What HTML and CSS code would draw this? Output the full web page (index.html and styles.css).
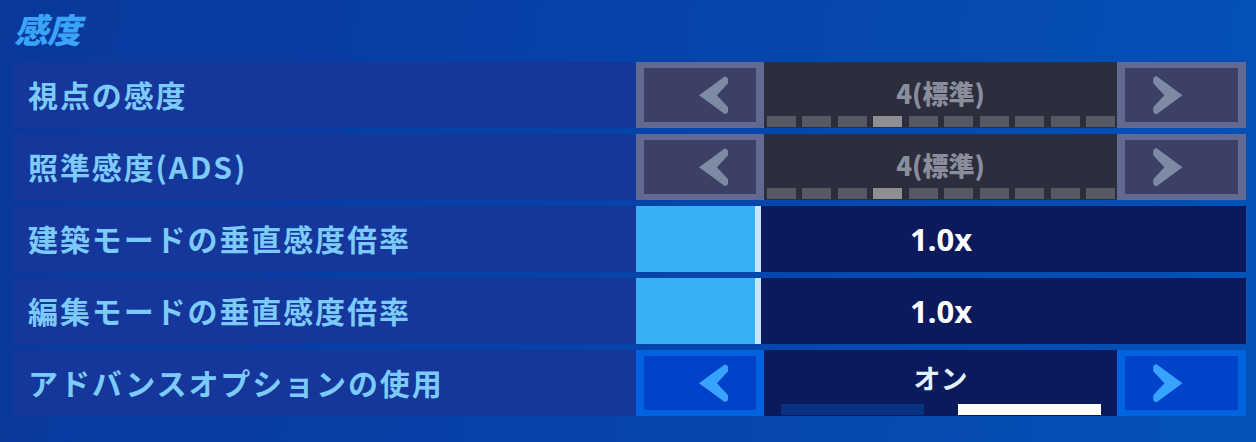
FILE: index.html
```html
<!DOCTYPE html>
<html lang="ja">
<head>
<meta charset="utf-8">
<title>感度</title>
<link rel="stylesheet" href="styles.css">
</head>
<body>
<div class="screen">
  <h1 class="title">感度</h1>
  <div class="rows">
    <div class="row">
      <div class="label">視点の感度</div>
      <div class="control selector muted">
        <div class="btn btn-left"><svg class="arrow" viewBox="0 0 112 54"><polygon points="55,27 81,8 84,10 84,15 73,27 84,39 84,44 81,46"/></svg></div>
        <div class="center">
          <div class="value">4(標準)</div>
          <div class="segments">
            <span></span><span></span><span></span><span class="on"></span><span></span><span></span><span></span><span></span><span></span><span></span>
          </div>
        </div>
        <div class="btn btn-right"><svg class="arrow flip" viewBox="0 0 112 54"><polygon points="55,27 81,8 84,10 84,15 73,27 84,39 84,44 81,46"/></svg></div>
      </div>
    </div>
    <div class="row">
      <div class="label">照準感度(ADS)</div>
      <div class="control selector muted">
        <div class="btn btn-left"><svg class="arrow" viewBox="0 0 112 54"><polygon points="55,27 81,8 84,10 84,15 73,27 84,39 84,44 81,46"/></svg></div>
        <div class="center">
          <div class="value">4(標準)</div>
          <div class="segments">
            <span></span><span></span><span></span><span class="on"></span><span></span><span></span><span></span><span></span><span></span><span></span>
          </div>
        </div>
        <div class="btn btn-right"><svg class="arrow flip" viewBox="0 0 112 54"><polygon points="55,27 81,8 84,10 84,15 73,27 84,39 84,44 81,46"/></svg></div>
      </div>
    </div>
    <div class="row">
      <div class="label">建築モードの垂直感度倍率</div>
      <div class="control slider">
        <div class="fill" style="width:119px"></div>
        <div class="knob"></div>
        <div class="slider-value">1.0x</div>
      </div>
    </div>
    <div class="row">
      <div class="label">編集モードの垂直感度倍率</div>
      <div class="control slider">
        <div class="fill" style="width:119px"></div>
        <div class="knob"></div>
        <div class="slider-value">1.0x</div>
      </div>
    </div>
    <div class="row">
      <div class="label">アドバンスオプションの使用</div>
      <div class="control selector active">
        <div class="btn btn-left"><svg class="arrow" viewBox="0 0 112 54"><polygon points="55,27 81,8 84,10 84,15 73,27 84,39 84,44 81,46"/></svg></div>
        <div class="center">
          <div class="value toggle-value">オン</div>
          <div class="toggle-bars"><span></span><span class="on"></span></div>
        </div>
        <div class="btn btn-right"><svg class="arrow flip" viewBox="0 0 112 54"><polygon points="55,27 81,8 84,10 84,15 73,27 84,39 84,44 81,46"/></svg></div>
      </div>
    </div>
  </div>
</div>
</body>
</html>
```

FILE: styles.css
```css
html, body {
  margin: 0;
  padding: 0;
}

body {
  width: 1256px;
  height: 442px;
  overflow: hidden;
  background: linear-gradient(100deg, #0a389c 0%, #0642a8 45%, #0552b7 100%);
  font-family: "Noto Sans CJK JP", "Noto Sans", sans-serif;
}

.screen {
  padding: 9px 0 0 13px;
}

.title {
  margin: 0 0 13px 0;
  height: 40px;
  line-height: 40px;
  font-size: 34px;
  font-weight: 900;
  font-style: italic;
  color: #3aa4f6;
  padding-left: 1px;
  letter-spacing: -1px;
}

.rows {
  display: flex;
  flex-direction: column;
  gap: 6px;
}

.row {
  display: grid;
  grid-template-columns: 623px 610px;
  height: 66px;
}

.label {
  background: #15369a;
  display: flex;
  align-items: center;
  padding: 0 0 3px 15px;
  font-size: 30px;
  font-weight: 700;
  letter-spacing: 1.9px;
  color: #7ccaf8;
  white-space: nowrap;
}

.control {
  position: relative;
  height: 66px;
}

.selector {
  display: grid;
  grid-template-columns: 128px 353px 129px;
}

.btn {
  box-sizing: border-box;
  border-style: solid;
  border-width: 6px 8px;
  display: flex;
}

.arrow {
  width: 100%;
  height: 100%;
  display: block;
}

.arrow.flip {
  transform: scaleX(-1);
}

.center {
  display: flex;
  flex-direction: column;
  align-items: center;
}

.value {
  margin-top: 16px;
  height: 30px;
  line-height: 30px;
  font-size: 26px;
  font-weight: 900;
}

.segments {
  margin-top: 8px;
  align-self: stretch;
  display: grid;
  grid-template-columns: repeat(10, 1fr);
  column-gap: 6.5px;
  padding: 0 2px 0 3px;
  height: 11px;
}

.segments span {
  background: #575862;
}

.segments span.on {
  background: #8f8f92;
}

/* muted (greyed) selectors */
.muted .btn {
  border-color: #636a92;
  background: #3c3f66;
}

.muted .arrow polygon {
  fill: #7c8aa3;
}

.muted .center {
  background: #2c2e3e;
}

.muted .value {
  color: #8a8e9c;
}

/* active selector */
.active .btn {
  border-color: #0064e1;
  background: #0042c9;
}

.active .arrow polygon {
  fill: #38a2ff;
}

.active .center {
  background: #0b1a5c;
}

.toggle-value {
  margin-top: 13px;
  font-size: 27px;
  font-weight: 700;
  color: #e2f2ff;
}

.toggle-bars {
  margin-top: 11px;
  align-self: stretch;
  display: flex;
  gap: 34px;
  padding: 0 16px 0 17px;
  height: 11px;
}

.toggle-bars span {
  flex: 1;
  background: #073283;
}

.toggle-bars span.on {
  background: #ffffff;
}

/* sliders */
.slider {
  display: flex;
  background: #0b1a5c;
}

.fill {
  background: #38b0f5;
  height: 100%;
}

.knob {
  width: 6px;
  height: 100%;
  background: #c8e6fa;
}

.slider-value {
  position: absolute;
  inset: 0;
  display: flex;
  align-items: center;
  justify-content: center;
  font-family: "Noto Sans", sans-serif;
  font-size: 31px;
  font-weight: 700;
  color: #ffffff;
}
```
